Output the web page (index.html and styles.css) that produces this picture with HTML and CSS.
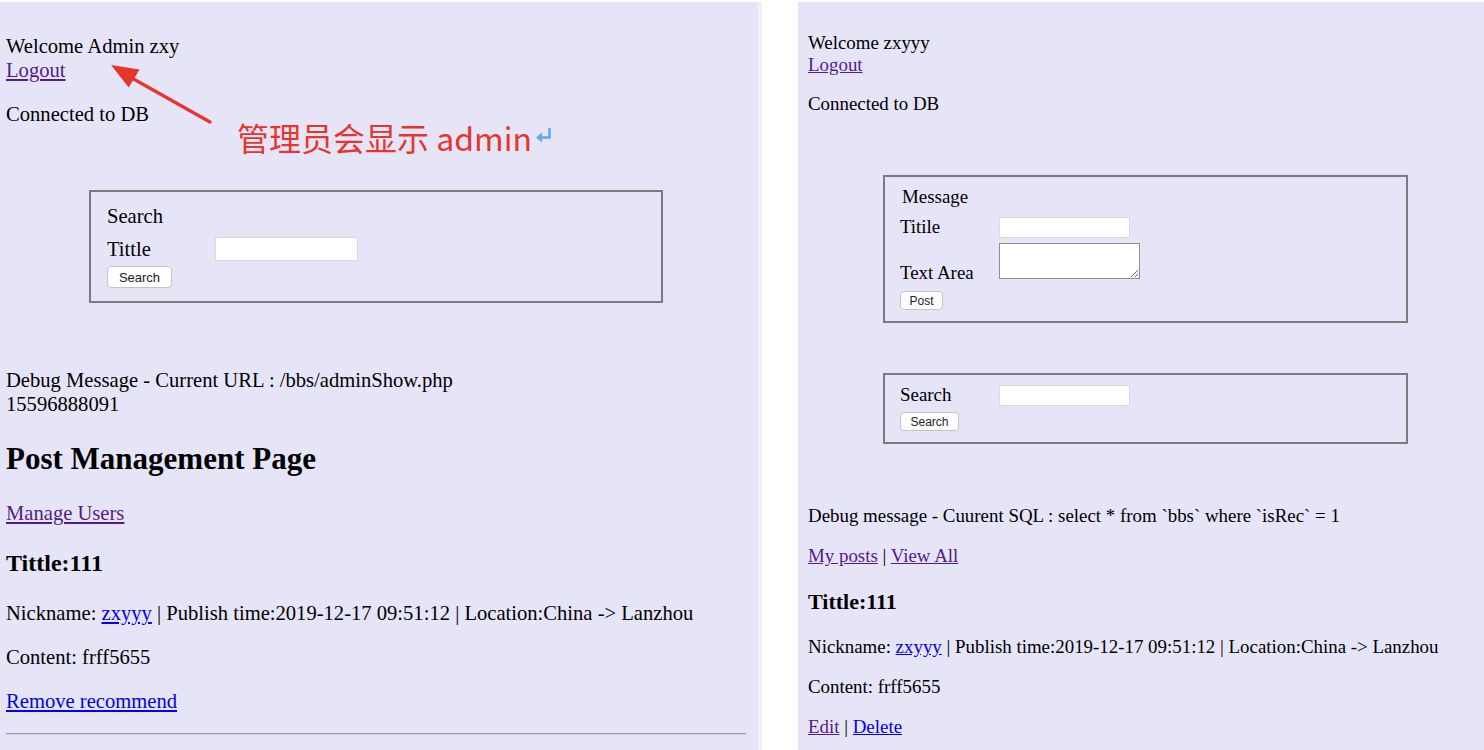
FILE: index.html
```html
<!DOCTYPE html>
<html lang="en">
<head>
<meta charset="utf-8">
<title>BBS screenshots</title>
<link rel="stylesheet" href="styles.css">
</head>
<body>
<div class="shot">
  <div class="panel left">
    <p class="welcome">Welcome Admin zxy<br><a class="visited" href="#">Logout</a></p>
    <p class="connected">Connected to DB</p>

    <div class="box box-admin">
      <div class="legend">Search</div>
      <div class="row"><span class="lbl">Tittle</span><input class="field" type="text"></div>
      <button class="btn btn-lg">Search</button>
    </div>

    <p class="debug">Debug Message - Current URL : /bbs/adminShow.php<br>15596888091</p>
    <h2 class="page-title">Post Management Page</h2>
    <p class="manage"><a class="visited" href="#">Manage Users</a></p>
    <h3 class="post-title">Tittle:111</h3>
    <p class="nick">Nickname: <a class="link" href="#">zxyyy</a> | Publish time:2019-12-17 09:51:12 | Location:China -&gt; Lanzhou</p>
    <p class="content">Content: frff5655</p>
    <p class="remove"><a class="link" href="#">Remove recommend</a></p>
    <hr class="rule">

    <svg class="arrow" width="260" height="160" viewBox="0 0 260 160">
      <line x1="210" y1="122" x2="130" y2="77" stroke="#e8352b" stroke-width="3.2" stroke-linecap="round"/>
      <polygon points="111,65 128.7,87.5 139.5,69.5" fill="#e8352b"/>
    </svg>
    <div class="note">管理员会显示 admin<svg class="ret" width="17" height="16" viewBox="0 0 17 16"><path d="M14.5 1 V10.5 H6" fill="none" stroke="#5eaaf0" stroke-width="2.6"/><polygon points="1,10.5 7,5.5 7,15.5" fill="#5eaaf0"/></svg></div>
  </div>

  <div class="gutter"><div class="strip"></div></div>

  <div class="panel right">
    <p class="r-welcome">Welcome zxyyy<br><a class="visited" href="#">Logout</a></p>
    <p class="r-connected">Connected to DB</p>

    <div class="box box-msg">
      <div class="r-legend">Message</div>
      <div class="r-row"><span class="r-lbl">Titile</span><input class="field r-field" type="text"></div>
      <div class="r-row r-row-area"><span class="r-lbl r-lbl-area">Text Area</span><textarea class="area"></textarea></div>
      <button class="btn btn-sm btn-post">Post</button>
    </div>

    <div class="box box-search">
      <div class="r-row"><span class="r-lbl">Search</span><input class="field r-field" type="text"></div>
      <button class="btn btn-sm btn-search">Search</button>
    </div>

    <p class="r-debug">Debug message - Cuurent SQL : select * from `bbs` where `isRec` = 1</p>
    <p class="r-nav"><a class="visited" href="#">My posts</a> | <a class="visited" href="#">View All</a></p>
    <h3 class="r-title">Tittle:111</h3>
    <p class="r-nick">Nickname: <a class="link" href="#">zxyyy</a> | Publish time:2019-12-17 09:51:12 | Location:China -&gt; Lanzhou</p>
    <p class="r-content">Content: frff5655</p>
    <p class="r-actions"><a class="visited" href="#">Edit</a> | <a class="link" href="#">Delete</a></p>
  </div>
</div>
</body>
</html>
```

FILE: styles.css
```css
html, body {
  margin: 0;
  background: #ffffff;
}
body {
  padding-top: 2px;
  font-family: "Liberation Serif", "Times New Roman", serif;
  color: #000;
  overflow: hidden;
}
p, h2, h3 { margin: 0; }

.shot {
  display: flex;
  height: 748px;
}
.panel {
  background: #e6e5f8;
  position: relative;
  box-sizing: border-box;
}
.left {
  width: 758px;
  padding: 32px 12px 0 6px;
  font-size: 20.6px;
  line-height: 24px;
}
.gutter {
  width: 40px;
  display: flex;
}
.strip {
  width: 4px;
  background: #f1f1f3;
}
.right {
  flex: 1;
  padding: 30px 0 0 10px;
  font-size: 18.9px;
  line-height: 22px;
}

a.visited { color: #551a8b; text-decoration: underline; }
a.link { color: #0000ee; text-decoration: underline; }

/* boxes */
.box {
  box-sizing: border-box;
  border: 2px solid #7b7b7e;
}
.connected { margin-top: 20px; }
.box-admin {
  margin: 64px 0 0 83px;
  width: 574px;
  padding: 12px 0 13px 16px;
}
.row {
  display: flex;
  align-items: center;
  height: 25px;
  margin-top: 8px;
}
.lbl { width: 108px; }
.field {
  box-sizing: border-box;
  width: 143px;
  height: 24px;
  margin: 0;
  border: 1px solid #d9d9e0;
  background: #fff;
  padding: 0 4px;
}
.btn {
  display: block;
  box-sizing: border-box;
  margin: 0;
  padding: 0;
  background: #fff;
  border: 1px solid #c4c4c8;
  border-radius: 4px;
  font-family: "Liberation Sans", Arial, sans-serif;
  color: #222;
}
.btn-lg {
  margin-top: 5px;
  width: 65px;
  height: 22px;
  font-size: 13px;
}

.debug { margin-top: 65px; }
.page-title {
  margin-top: 26px;
  font-size: 31px;
  line-height: 34px;
  font-weight: bold;
}
.manage { margin-top: 25px; }
.post-title {
  margin-top: 24px;
  font-size: 24px;
  line-height: 28px;
  font-weight: bold;
}
.nick { margin-top: 24px; }
.content { margin-top: 20px; }
.remove { margin-top: 20px; }
.rule {
  margin: 20px 0 0 0;
  border: 0;
  border-top: 1px solid #9c9c9e;
  border-bottom: 1px solid #cfcfd8;
  height: 0;
}

/* annotation overlay */
.arrow {
  position: absolute;
  left: 0;
  top: -2px;
}
.note {
  position: absolute;
  left: 237px;
  top: 118px;
  font-family: "Noto Sans CJK SC", "Noto Sans", sans-serif;
  font-size: 32px;
  line-height: 34px;
  color: #e8352b;
  white-space: nowrap;
}
.ret {
  margin-left: 3px;
  vertical-align: 8px;
}

/* right panel */
.r-connected { margin-top: 17px; }
.box-msg {
  margin: 60px 0 0 75px;
  width: 525px;
  padding: 9px 0 11px 15px;
}
.r-legend { padding-left: 2px; }
.r-row {
  display: flex;
  align-items: center;
  height: 22px;
  margin-top: 8px;
}
.r-lbl { width: 99px; }
.r-field {
  width: 131px;
  height: 21px;
}
.r-row-area {
  align-items: flex-end;
  height: 36px;
  margin-top: 5px;
}
.r-lbl-area { margin-bottom: -5px; }
.area {
  box-sizing: border-box;
  width: 141px;
  height: 36px;
  margin: 0;
  border: 1px solid #8e8e92;
  background: #fff;
  resize: both;
}
.btn-sm {
  height: 19px;
  font-size: 12px;
}
.btn-post {
  margin-top: 12px;
  width: 43px;
}
.box-search {
  margin: 50px 0 0 75px;
  width: 525px;
  padding: 1px 0 11px 15px;
}
.btn-search {
  margin-top: 6px;
  width: 59px;
}
.r-debug { margin-top: 61px; }
.r-nav { margin-top: 18px; }
.r-title {
  margin-top: 22px;
  font-size: 22px;
  line-height: 26px;
  font-weight: bold;
}
.r-nick { margin-top: 21px; }
.r-content { margin-top: 18px; }
.r-actions { margin-top: 18px; }
```
